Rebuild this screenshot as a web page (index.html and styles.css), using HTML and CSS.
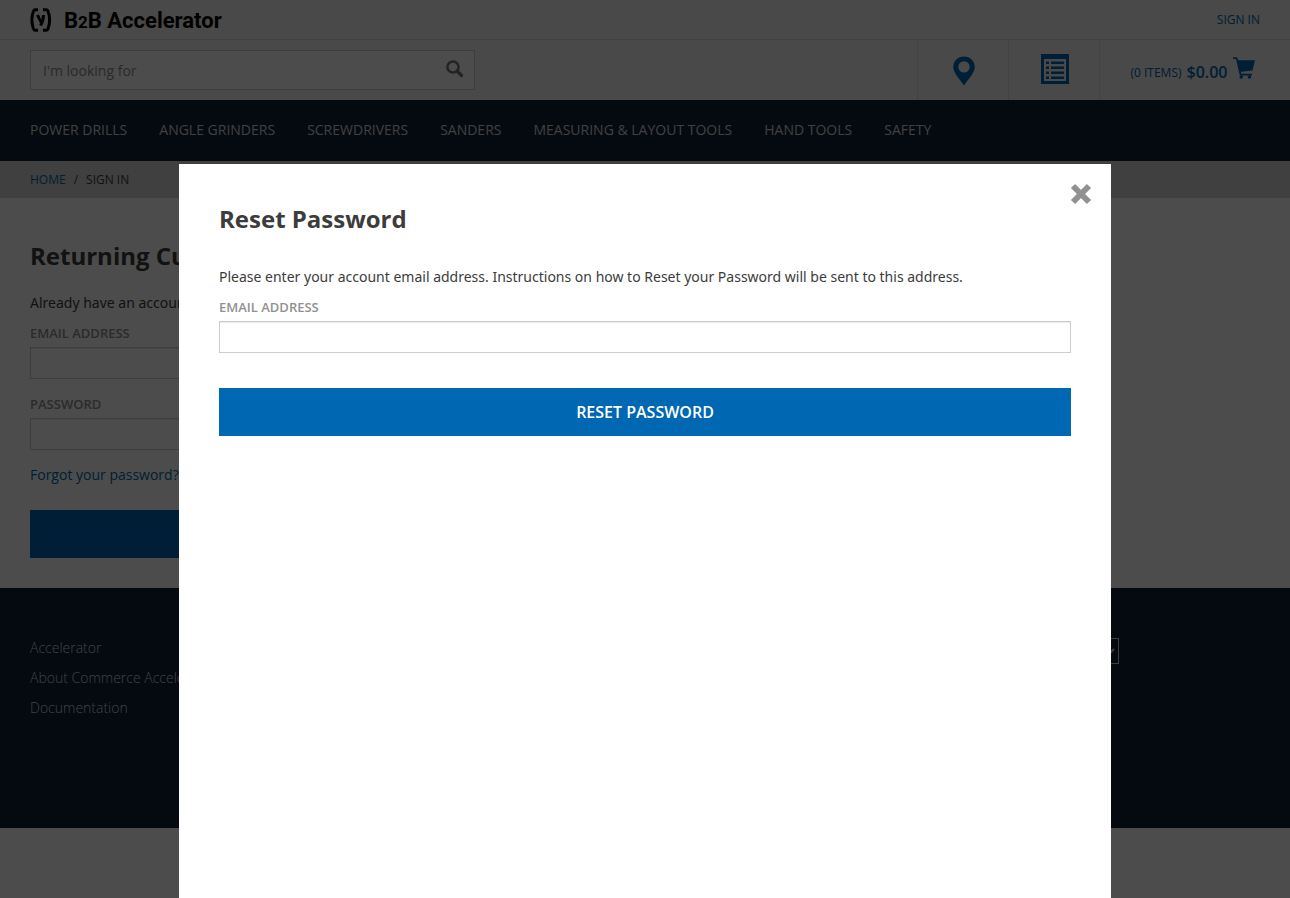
FILE: index.html
```html
<!DOCTYPE html>
<html lang="en">
<head>
<meta charset="utf-8">
<title>Sign In | B2B Accelerator</title>
<link rel="stylesheet" href="styles.css">
</head>
<body>
<header class="header">
  <div class="header-top">
    <a class="logo" href="#" aria-label="B2B Accelerator">
      <svg class="logo-mark" viewBox="0 0 22 24" aria-hidden="true">
        <path d="M8 1.800H5Q3.800 1.800 3.300 3.600Q.500 12 3.300 20.400Q3.800 22.200 5 22.200H8M13 1.800H16.500Q17.700 1.800 18.200 3.600Q21 12 18.200 20.400Q17.700 22.200 16.500 22.200H13" fill="none" stroke="#000" stroke-width="3"/>
        <path d="M6 7.500L9 6.500L11.300 12L12 7H15Q14.800 14 11.800 18L9.300 17L10 15Z" fill="#000"/>
      </svg>
      <span class="logo-text">B<span class="logo-digit">2</span>B Accelerator</span>
    </a>
    <a class="sign-in" href="#">SIGN IN</a>
  </div>
  <div class="header-main">
    <form class="search">
      <input class="search-input" type="text" placeholder="I'm looking for" aria-label="Search">
      <button class="search-button" type="button" aria-label="Search">
        <svg width="18" height="18" viewBox="0 0 18 18" aria-hidden="true">
          <circle cx="7" cy="7" r="5.600" fill="none" stroke="#777" stroke-width="2.500"/>
          <path d="M11 11L15.500 15.500" stroke="#777" stroke-width="3.200" stroke-linecap="round"/>
        </svg>
      </button>
    </form>
    <div class="tools">
      <a class="tool" href="#" aria-label="Store finder">
        <svg width="22" height="30" viewBox="0 0 22 30" aria-hidden="true">
          <path fill-rule="evenodd" d="M11 .5C5 .5.300 5 .300 11C.300 17 6 22 11 29.500C16 22 21.700 17 21.700 11C21.700 5 17 .5 11 .5ZM11 5.200A5.700 5.700 0 1 1 11 16.600A5.700 5.700 0 1 1 11 5.200Z" fill="#0067b2"/>
        </svg>
      </a>
      <a class="tool tool-list" href="#" aria-label="Quick order">
        <svg width="28" height="30" viewBox="0 0 28 30" aria-hidden="true">
          <path fill-rule="evenodd" d="M0 0H28V30H0ZM3 5V27H25V5Z" fill="#0067b2"/>
          <path d="M5 8.800H8M5 13.800H8M5 18.800H8M5 23.800H8M10 8.800H23M10 13.800H23M10 18.800H23M10 23.800H23" stroke="#0067b2" stroke-width="2.400"/>
        </svg>
      </a>
      <a class="tool cart" href="#">
        <span class="cart-items">(0 ITEMS)</span>
        <span class="cart-total">$0.00</span>
        <svg class="cart-icon" width="22" height="22" viewBox="0 0 22 22" aria-hidden="true">
          <path d="M0 .2H4L5.200 3.200H22L19.500 13.500L7.800 14.800L8.300 16.800H19V18.500H6.800L3 2H0Z" fill="#0067b2"/>
          <circle cx="8.300" cy="20" r="1.800" fill="#0067b2"/>
          <circle cx="16.500" cy="20" r="1.800" fill="#0067b2"/>
        </svg>
      </a>
    </div>
  </div>
</header>
<nav class="nav">
  <a href="#">POWER DRILLS</a>
  <a href="#">ANGLE GRINDERS</a>
  <a href="#">SCREWDRIVERS</a>
  <a href="#">SANDERS</a>
  <a href="#">MEASURING &amp; LAYOUT TOOLS</a>
  <a href="#">HAND TOOLS</a>
  <a href="#">SAFETY</a>
</nav>
<div class="breadcrumb">
  <a href="#">HOME</a><span>/</span><span>SIGN IN</span>
</div>
<main class="content">
  <form class="login">
    <h1 class="title">Returning Customer</h1>
    <p class="text">Already have an account?</p>
    <label class="label" for="email">EMAIL ADDRESS</label>
    <input class="field" id="email" type="text">
    <label class="label label-next" for="password">PASSWORD</label>
    <input class="field" id="password" type="password">
    <a class="forgot" href="#">Forgot your password?</a>
    <button class="primary" type="button">LOG IN</button>
  </form>
</main>
<footer class="footer">
  <div class="footer-links">
    <a href="#">Accelerator</a>
    <a href="#">About Commerce Accelerator</a>
    <a href="#">Documentation</a>
  </div>
  <div class="footer-side">
    <select class="language" aria-label="Language"><option>English</option></select>
  </div>
</footer>
<div class="overlay">
  <section class="modal" role="dialog" aria-modal="true" aria-labelledby="reset-title">
    <button class="close" type="button" aria-label="Close">
      <svg width="22" height="22" viewBox="0 0 22 22" aria-hidden="true">
        <path d="M3 3L19 19M19 3L3 19" stroke="#919191" stroke-width="6"/>
      </svg>
    </button>
    <h2 class="title" id="reset-title">Reset Password</h2>
    <p class="text modal-text">Please enter your account email address. Instructions on how to Reset your Password will be sent to this address.</p>
    <label class="label" for="reset-email">EMAIL ADDRESS</label>
    <input class="field" id="reset-email" type="text">
    <button class="primary modal-submit" type="button">RESET PASSWORD</button>
  </section>
</div>
</body>
</html>
```
FILE: styles.css
```css
* { box-sizing: border-box; }

body {
  margin: 0;
  background: #fff;
  color: #3c3c3c;
  font: 14px/20px "Open Sans", sans-serif;
}

a { color: #0067b2; text-decoration: none; }
button, input, select { font: inherit; border-radius: 0; }
svg { display: block; }

.header { background: #f3f3f3; }
.header-top {
  display: flex;
  justify-content: space-between;
  align-items: center;
  height: 40px;
  padding: 0 30px;
  border-bottom: 1px solid #dcdcdc;
}
.logo { display: flex; align-items: center; gap: 12px; color: #000; }
.logo-mark { width: 22px; height: 24px; }
.logo-text { padding-top: 4px; font: bold 22px/24px Roboto, sans-serif; }
.logo-digit { font-size: 17px; }
.sign-in { font-size: 12px; }

.header-main { display: flex; justify-content: space-between; height: 60px; padding-left: 30px; }
.search {
  display: flex;
  flex: 0 1 445px;
  height: 40px;
  margin-top: 10px;
  background: #fff;
  border: 1px solid #ccc;
}
.search-input { flex: 1; min-width: 0; padding: 2px 12px 0; border: 0; background: transparent; }
.search-input::placeholder { color: #8c8c8c; opacity: 1; }
.search-button { padding: 0 10px 2px; border: 0; background: transparent; }

.tools { display: flex; }
.tool {
  display: flex;
  align-items: center;
  justify-content: center;
  width: 91px;
  padding: 2px 0 0 2px;
  border-left: 1px solid #dcdcdc;
}
.tool-list { padding-bottom: 4px; }
.cart { width: 191px; gap: 5px; padding: 4px 5px 0 0; }
.cart-items { padding-top: 2px; font-size: 12px; }
.cart-total { font-size: 16px; font-weight: 600; }
.cart-icon { margin-bottom: 8px; }

.nav { display: flex; gap: 32px; padding: 20px 30px 21px; background: #122138; }
.nav a { color: #d7d7d7; }

.breadcrumb {
  display: flex;
  gap: 8px;
  height: 37px;
  padding: 9px 30px;
  background: #d7d7d7;
  font-size: 12px;
}

.content { padding: 40px 30px 30px; }
.login { display: flex; flex-direction: column; width: 50%; }
.title { margin: 0; font-size: 24px; line-height: 36px; font-weight: 700; }
.text { margin: 19px 0 10px; font-family: "Noto Sans", "Open Sans", sans-serif; }
.label { display: block; margin-bottom: 4px; color: #919191; font-size: 13px; font-weight: 600; }
.label-next { margin-top: 15px; }
.field {
  display: block;
  width: 100%;
  height: 32px;
  padding: 4px 10px;
  background: #fff;
  border: 1px solid #ccc;
  box-shadow: inset 0 1px 1px rgba(0, 0, 0, .08);
}
.forgot { margin: 15px 0 25px; }
.primary {
  display: block;
  width: 100%;
  height: 48px;
  border: 0;
  background: #0067b2;
  color: #fff;
  font-size: 16px;
  font-weight: 600;
}

.footer {
  display: flex;
  justify-content: space-between;
  height: 240px;
  padding: 50px 30px;
  background: #122138;
}
.footer-links { display: flex; flex-direction: column; gap: 10px; }
.footer-links a { color: #d7d7d7; font-weight: 300; }
.footer-side { width: 230px; }
.language {
  display: block;
  width: 89px;
  height: 26px;
  background: transparent;
  border: 1px solid #ccc;
  color: #d7d7d7;
}

.overlay {
  position: fixed;
  inset: 0;
  display: flex;
  justify-content: center;
  padding-top: 164px;
  background: rgba(0, 0, 0, .7);
}
.modal { position: relative; width: 100%; max-width: 932px; padding: 37px 40px; background: #fff; }
.modal-text { margin-top: 30px; }
.modal-submit { margin-top: 35px; }
.close { position: absolute; top: 19px; right: 19px; padding: 0; border: 0; background: transparent; }
```
